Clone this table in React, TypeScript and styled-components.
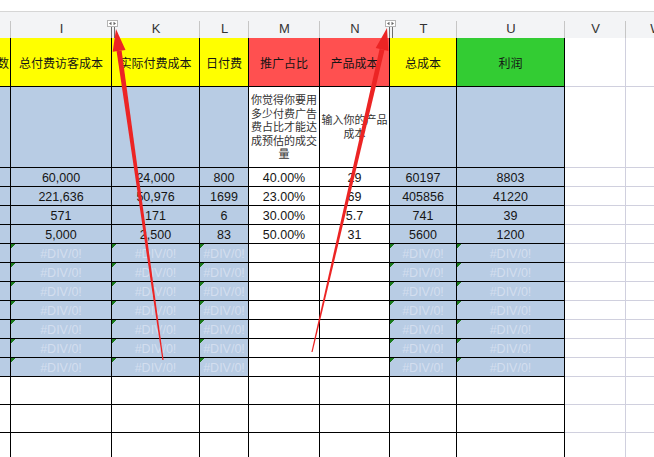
import React from 'react';
import styled, { createGlobalStyle } from 'styled-components';

const GlobalStyle = createGlobalStyle`
  html, body { margin: 0; padding: 0; background: #fff; }
  body { font-family: "Liberation Sans", "Noto Sans CJK SC", sans-serif; }
`;

type Col = { key: string; letter: string; w: number };

const COLS: Col[] = [
  { key: 'H', letter: '', w: 11 },
  { key: 'I', letter: 'I', w: 101 },
  { key: 'K', letter: 'K', w: 88 },
  { key: 'L', letter: 'L', w: 49 },
  { key: 'M', letter: 'M', w: 71 },
  { key: 'N', letter: 'N', w: 70 },
  { key: 'T', letter: 'T', w: 67 },
  { key: 'U', letter: 'U', w: 108 },
  { key: 'V', letter: 'V', w: 61 },
  { key: 'W', letter: 'W', w: 61 },
];

const YELLOW = '#ffff00';
const RED = '#ff5050';
const GREEN = '#33cc33';
const BLUE = '#b8cce4';
const WHITE = '#ffffff';

const Sheet = styled.div`
  position: relative;
  width: 654px;
  height: 457px;
  overflow: hidden;
  background: #fff;
`;

const TopStrip = styled.div`
  height: 11px;
  background: #fff;
`;

const Grid = styled.div<{ $cols: string; $rows: string }>`
  display: grid;
  grid-template-columns: ${(p) => p.$cols};
  grid-template-rows: ${(p) => p.$rows};
  width: max-content;
`;

const LetterCell = styled.div`
  box-sizing: border-box;
  border-top: 1px solid #d6d6d6;
  background: linear-gradient(#c6c6c6, #c6c6c6) right bottom / 1px 17px no-repeat, #f3f4f6;
  display: flex;
  align-items: flex-end;
  justify-content: center;
  padding-bottom: 2px;
  font: 13px "Liberation Sans", sans-serif;
  color: #333;
  overflow: hidden;
`;

type Tone = 'ink' | 'ghost' | 'title' | 'note';

const Cell = styled.div<{ $bg: string; $light?: boolean; $flag?: boolean; $tone?: Tone; $end?: boolean }>`
  box-sizing: border-box;
  border-right: 1px solid ${(p) => (p.$light ? '#d0d0de' : '#000')};
  border-bottom: 1px solid ${(p) => (p.$light ? '#d0d0de' : '#000')};
  background: ${(p) =>
    p.$flag ? `linear-gradient(135deg, #1b7a1b 3.4px, transparent 3.4px), ${p.$bg}` : p.$bg};
  display: flex;
  align-items: center;
  justify-content: ${(p) => (p.$end ? 'flex-end' : 'center')};
  overflow: hidden;
  white-space: ${(p) => (p.$tone === 'note' ? 'normal' : 'nowrap')};
  text-align: center;
  font-family: ${(p) =>
    p.$tone === 'title' || p.$tone === 'note'
      ? '"Noto Sans CJK SC", sans-serif'
      : '"Liberation Sans", sans-serif'};
  font-size: ${(p) => (p.$tone === 'title' ? '12px' : p.$tone === 'note' ? '11px' : '12.5px')};
  line-height: ${(p) => (p.$tone === 'note' ? '13.6px' : 'normal')};
  color: ${(p) => (p.$tone === 'ghost' ? '#d3deef' : p.$tone === 'note' ? '#333' : '#151515')};
  padding-top: ${(p) => (p.$tone === 'title' || p.$tone === 'note' ? '0' : '2px')};
  padding-right: ${(p) => (p.$end ? '1px' : '0')};
`;

const Marker = styled.div<{ $x: number }>`
  position: absolute;
  left: ${(p) => p.$x}px;
  top: 20px;
  width: 11px;
  height: 18px;
  display: flex;
  flex-direction: column;
  align-items: center;
`;

const MarkerBox = styled.svg`
  display: block;
`;

const MarkerLines = styled.div`
  width: 2px;
  height: 11px;
  border-left: 1px solid #6d6d6d;
  border-right: 1px solid #6d6d6d;
`;

const Overlay = styled.svg`
  position: absolute;
  left: 0;
  top: 0;
  pointer-events: none;
`;

type CellSpec = { text?: string; bg: string; flag?: boolean; tone?: Tone; end?: boolean };

const blueRow = (vals: string[]): CellSpec[] => [
  { bg: BLUE },
  { bg: BLUE, text: vals[0] },
  { bg: BLUE, text: vals[1] },
  { bg: BLUE, text: vals[2] },
  { bg: WHITE, text: vals[3] },
  { bg: WHITE, text: vals[4] },
  { bg: BLUE, text: vals[5] },
  { bg: BLUE, text: vals[6] },
];

const errRow = (): CellSpec[] => [
  { bg: BLUE },
  { bg: BLUE, text: '#DIV/0!', flag: true, tone: 'ghost' },
  { bg: BLUE, text: '#DIV/0!', flag: true, tone: 'ghost' },
  { bg: BLUE, text: '#DIV/0!', flag: true, tone: 'ghost' },
  { bg: WHITE },
  { bg: WHITE },
  { bg: BLUE, text: '#DIV/0!', flag: true, tone: 'ghost' },
  { bg: BLUE, text: '#DIV/0!', flag: true, tone: 'ghost' },
];

const blankRow = (): CellSpec[] => Array.from({ length: 8 }, () => ({ bg: WHITE }));

const ROWS: { h: number; cells: CellSpec[] }[] = [
  {
    h: 49,
    cells: [
      { bg: YELLOW, text: '人数', tone: 'title', end: true },
      { bg: YELLOW, text: '总付费访客成本', tone: 'title' },
      { bg: YELLOW, text: '实际付费成本', tone: 'title' },
      { bg: YELLOW, text: '日付费', tone: 'title' },
      { bg: RED, text: '推广占比', tone: 'title' },
      { bg: RED, text: '产品成本', tone: 'title' },
      { bg: YELLOW, text: '总成本', tone: 'title' },
      { bg: GREEN, text: '利润', tone: 'title' },
    ],
  },
  {
    h: 81,
    cells: [
      { bg: BLUE },
      { bg: BLUE },
      { bg: BLUE },
      { bg: BLUE },
      { bg: WHITE, text: '你觉得你要用多少付费广告费占比才能达成预估的成交量', tone: 'note' },
      { bg: WHITE, text: '输入你的产品成本', tone: 'note' },
      { bg: BLUE },
      { bg: BLUE },
    ],
  },
  { h: 19, cells: blueRow(['60,000', '24,000', '800', '40.00%', '29', '60197', '8803']) },
  { h: 19, cells: blueRow(['221,636', '50,976', '1699', '23.00%', '69', '405856', '41220']) },
  { h: 19, cells: blueRow(['571', '171', '6', '30.00%', '5.7', '741', '39']) },
  { h: 19, cells: blueRow(['5,000', '2,500', '83', '50.00%', '31', '5600', '1200']) },
  ...Array.from({ length: 7 }, () => ({ h: 19, cells: errRow() })),
  { h: 28, cells: blankRow() },
  { h: 28, cells: blankRow() },
  { h: 28, cells: blankRow() },
];

const ResizeMarker: React.FC<{ x: number }> = ({ x }) => (
  <Marker $x={x}>
    <MarkerBox width="11" height="7" viewBox="0 0 11 7">
      <rect x="0.5" y="0.5" width="10" height="6" fill="#fff" stroke="#b5b5b5" />
      <polygon points="2,3.5 4.5,1.8 4.5,5.2" fill="#666" />
      <polygon points="9,3.5 6.5,1.8 6.5,5.2" fill="#666" />
    </MarkerBox>
    <MarkerLines />
  </Marker>
);

const ARROWS = [
  {
    shaft: '121.6,50.4 163.6,359.9 162.4,360.1 116.6,51.2',
    head: '125.5,49.9 116,29 112.7,51.7',
  },
  {
    shaft: '384.5,50.0 312.6,352.1 311.4,351.9 379.6,48.9',
    head: '388.4,50.9 387,28 375.7,47.96',
  },
];

export default function App() {
  const cols = COLS.map((c) => `${c.w}px`).join(' ');
  const rows = ['27px', ...ROWS.map((r) => `${r.h}px`)].join(' ');
  return (
    <Sheet>
      <GlobalStyle />
      <TopStrip />
      <Grid $cols={cols} $rows={rows}>
        {COLS.map((c) => (
          <LetterCell key={`h-${c.key}`}>{c.letter}</LetterCell>
        ))}
        {ROWS.map((r, ri) => (
          <React.Fragment key={ri}>
            {r.cells.map((s, ci) => (
              <Cell key={ci} $bg={s.bg} $flag={s.flag} $tone={s.tone} $end={s.end}>
                {s.text}
              </Cell>
            ))}
            <Cell $bg={WHITE} $light />
            <Cell $bg={WHITE} $light />
          </React.Fragment>
        ))}
      </Grid>
      <ResizeMarker x={107} />
      <ResizeMarker x={385} />
      <Overlay width="654" height="457" viewBox="0 0 654 457">
        {ARROWS.map((a, i) => (
          <g key={i} fill="#ec2424">
            <polygon points={a.shaft} />
            <polygon points={a.head} />
          </g>
        ))}
      </Overlay>
    </Sheet>
  );
}
